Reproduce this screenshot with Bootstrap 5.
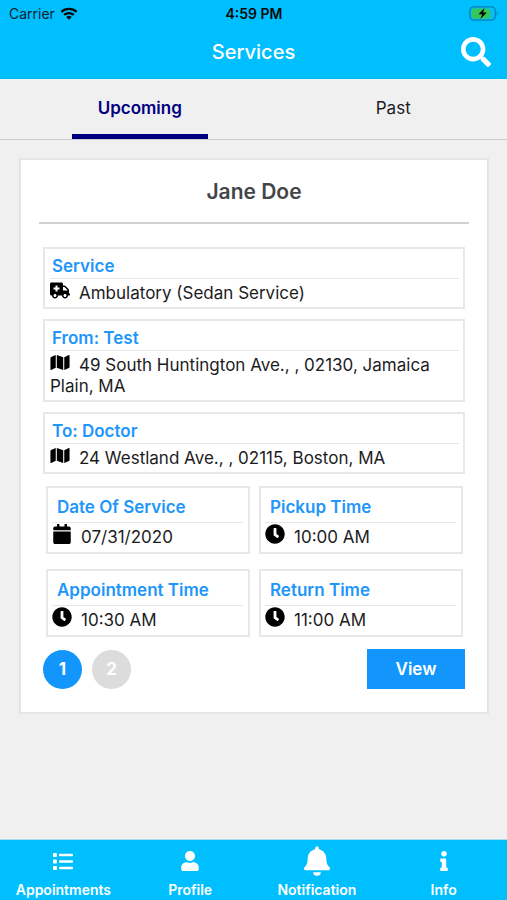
<!DOCTYPE html>
<html lang="en">
<head>
<meta charset="utf-8">
<meta name="viewport" content="width=device-width, initial-scale=1">
<title>Services</title>
<link href="https://cdn.jsdelivr.net/npm/bootstrap@5.3.0/dist/css/bootstrap.min.css" rel="stylesheet">
<style>
body { font-family: Inter, "Liberation Sans", sans-serif; font-size: 17px; line-height: 21px; color: #1c1c1e; background: #f0f0f0; }
.app-top { background: #00bfff; color: #fff; }
.three-up { display: grid; grid-template-columns: 1fr auto 1fr; align-items: center; }
.status { height: 27px; padding: 0 8px 0 9px; font-size: 14px; color: #10222c; }
.status-time { font-weight: 600; color: #0a0a0a; }
.title-bar { height: 52px; padding: 0 16px 2px; }
.title-bar h1 { font-size: 20px; line-height: 24px; font-weight: 500; }
.view-tabs { height: 61px; border-bottom: 1px solid #ccc; }
.view-tabs .tab-cell { padding-left: 26px; }
.tab-btn { width: 136px; height: 60px; border: 0; border-bottom: 5px solid transparent; background: none; color: #1c1c1e; padding: 4px 0 0; }
.tab-btn.active { color: #000080; font-weight: 600; border-bottom-color: #000080; }
.trip { margin: 18px 18px 0 19px; border: 2px solid #e2e4e5; background: #fff; padding: 0 18px 23px; }
.trip h2 { font-size: 21px; line-height: 26px; font-weight: 600; color: #434548; padding: 19px 0 17px; border-bottom: 2px solid #d0d0d0; }
.trip-body { padding: 23px 4px 0; }
.box-stack { gap: 10px; }
.info-box { border: 2px solid #e8e8e8; padding: 7px 4px 3px 5px; }
.info-box h3 { font-size: 17px; line-height: 21px; font-weight: 600; color: #1e96fa; margin: 0; padding: 0 0 1px 2px; border-bottom: 1px solid #e6e6e6; }
.info-box p { margin: 0; padding-top: 4px; }
.info-box svg { width: 20px; height: 17px; margin: -8px 9px 0 0; fill: #000; vertical-align: middle; }
.half-grid { display: grid; grid-template-columns: 1fr 1fr; gap: 15px 9px; padding: 12px 2px 0 3px; }
.half-grid .info-box { padding: 9px 5px 4px 4px; }
.half-grid h3 { padding: 0 0 4px 5px; }
.half-grid svg { height: 20px; }
.page-dots { gap: 10px; }
.page-dot { width: 39px; height: 39px; border: 0; border-radius: 50%; background: #dcdcdc; color: #fff; font-weight: 700; }
.page-dot.active { background: #1296fc; }
.view-btn { width: 98px; height: 40px; border: 0; background: #1296fc; color: #fff; font-weight: 600; }
.bottom-nav { background: #00bfff; border-top: 1px solid #a6dcec; height: 61px; }
.bottom-nav a { color: #fff; font-size: 14px; line-height: 16px; font-weight: 600; padding-top: 6px; gap: 6px; }
.nav-glyph { height: 30px; display: flex; align-items: center; }
.nav-glyph svg { fill: #fff; }
</style>
<script src="https://cdn.jsdelivr.net/npm/bootstrap@5.3.0/dist/js/bootstrap.bundle.min.js"></script>
</head>
<body class="d-flex flex-column min-vh-100">
<svg class="d-none" aria-hidden="true">
  <symbol id="i-map" viewBox="0 0 576 512"><path d="M0 117.66v346.32c0 11.32 11.43 19.06 21.94 14.86L160 416V32L20.12 87.95A32.006 32.006 0 0 0 0 117.66zM192 416l192 64V96L192 32v384zM554.06 33.16L416 96v384l139.88-55.95A31.996 31.996 0 0 0 576 394.34V48.02c0-11.32-11.43-19.06-21.94-14.86z"/></symbol>
  <symbol id="i-clock" viewBox="0 0 512 512"><path d="M256 8C119 8 8 119 8 256s111 248 248 248 248-111 248-248S393 8 256 8zm57.1 350.1L224.9 294c-3.1-2.3-4.9-5.9-4.9-9.7V116c0-6.6 5.4-12 12-12h48c6.6 0 12 5.4 12 12v137.7l63.5 46.2c5.4 3.9 6.5 11.4 2.6 16.8l-28.2 38.8c-3.9 5.3-11.4 6.5-16.8 2.6z"/></symbol>
</svg>

<header class="app-top">
  <div class="status three-up">
    <div class="d-flex align-items-center gap-1">
      <span>Carrier</span>
      <svg width="20" height="15" viewBox="0 0 22 16" fill="none" stroke="#0a0a0a" stroke-width="2.6" aria-hidden="true"><path d="M2.600 6.200a12.500 12.500 0 0 1 16.800 0M5.700 9.600a7.900 7.900 0 0 1 10.600 0"/><path d="M11 15l-3-3.200a4.300 4.300 0 0 1 6 0z" fill="#0a0a0a" stroke="none"/></svg>
    </div>
    <span class="status-time">4:59 PM</span>
    <svg class="ms-auto" width="30" height="15" viewBox="0 0 30 15" aria-hidden="true"><rect x=".8" y=".8" width="25.500" height="13.400" rx="4" fill="none" stroke="#0a7fb0" stroke-width="1.200"/><rect x="2.500" y="2.500" width="19" height="10" rx="2.500" fill="#35c75a"/><path d="M27.800 5q2 2.500 0 5z" fill="#0a7fb0"/><path d="M15.500 2L9.500 8.200h3.600L11.500 13l6.300-6.400h-3.700z" fill="#000"/></svg>
  </div>
  <div class="title-bar three-up">
    <span></span>
    <h1 class="m-0">Services</h1>
    <button type="button" class="btn p-0 border-0 ms-auto d-flex" aria-label="Search"><svg width="30" height="30" viewBox="0 0 512 512" fill="#fff"><path d="M505 442.700L405.300 343c-4.500-4.500-10.600-7-17-7H372c27.600-35.300 44-79.700 44-128C416 93.100 322.900 0 208 0S0 93.100 0 208s93.100 208 208 208c48.300 0 92.700-16.400 128-44v16.300c0 6.400 2.500 12.500 7 17l99.700 99.700c9.400 9.400 24.600 9.400 33.900 0l28.300-28.300c9.400-9.400 9.400-24.600.1-34zM208 336c-70.700 0-128-57.200-128-128 0-70.700 57.200-128 128-128 70.700 0 128 57.200 128 128 0 70.700-57.200 128-128 128z"/></svg></button>
  </div>
</header>

<nav class="view-tabs row g-0" aria-label="Service period">
  <div class="col-6 tab-cell text-center"><button type="button" class="tab-btn active">Upcoming</button></div>
  <div class="col-6 tab-cell text-center"><button type="button" class="tab-btn">Past</button></div>
</nav>

<main class="flex-grow-1">
  <article class="trip">
    <h2 class="m-0 text-center">Jane Doe</h2>
    <div class="trip-body">
      <div class="box-stack d-flex flex-column">
        <section class="info-box">
          <h3>Service</h3>
          <p><svg viewBox="0 0 640 512" aria-hidden="true"><path d="M624 352h-16V243.900c0-12.700-5.100-24.900-14.100-33.900L494 110.100c-9-9-21.200-14.100-33.900-14.100H416V48c0-26.500-21.500-48-48-48H48C21.500 0 0 21.500 0 48v320c0 26.500 21.500 48 48 48h16c0 53 43 96 96 96s96-43 96-96h128c0 53 43 96 96 96s96-43 96-96h48c8.800 0 16-7.200 16-16v-32c0-8.800-7.200-16-16-16zM160 464c-26.500 0-48-21.500-48-48s21.500-48 48-48 48 21.500 48 48-21.500 48-48 48zm144-248c0 4.400-3.600 8-8 8h-56v56c0 4.400-3.600 8-8 8h-48c-4.400 0-8-3.600-8-8v-56h-56c-4.400 0-8-3.600-8-8v-48c0-4.400 3.600-8 8-8h56v-56c0-4.400 3.600-8 8-8h48c4.400 0 8 3.600 8 8v56h56c4.400 0 8 3.600 8 8v48zm176 248c-26.500 0-48-21.500-48-48s21.500-48 48-48 48 21.500 48 48-21.500 48-48 48zm80-208H416V144h44.100l99.900 99.900V256z"/></svg>Ambulatory (Sedan Service)</p>
        </section>
        <section class="info-box">
          <h3>From: Test</h3>
          <p><svg aria-hidden="true"><use href="#i-map"/></svg>49 South Huntington Ave., , 02130, Jamaica Plain, MA</p>
        </section>
        <section class="info-box">
          <h3>To: Doctor</h3>
          <p><svg aria-hidden="true"><use href="#i-map"/></svg>24 Westland Ave., , 02115, Boston, MA</p>
        </section>
      </div>
      <div class="half-grid">
        <section class="info-box">
          <h3>Date Of Service</h3>
          <p><svg viewBox="0 0 448 512" aria-hidden="true"><path d="M12 192h424c6.600 0 12 5.400 12 12v260c0 26.500-21.500 48-48 48H48c-26.500 0-48-21.500-48-48V204c0-6.600 5.400-12 12-12zm436-44v-36c0-26.500-21.500-48-48-48h-48V12c0-6.600-5.400-12-12-12h-40c-6.600 0-12 5.400-12 12v52H160V12c0-6.600-5.400-12-12-12h-40c-6.600 0-12 5.400-12 12v52H48C21.500 64 0 85.500 0 112v36c0 6.600 5.400 12 12 12h424c6.600 0 12-5.400 12-12z"/></svg>07/31/2020</p>
        </section>
        <section class="info-box">
          <h3>Pickup Time</h3>
          <p><svg aria-hidden="true"><use href="#i-clock"/></svg>10:00 AM</p>
        </section>
        <section class="info-box">
          <h3>Appointment Time</h3>
          <p><svg aria-hidden="true"><use href="#i-clock"/></svg>10:30 AM</p>
        </section>
        <section class="info-box">
          <h3>Return Time</h3>
          <p><svg aria-hidden="true"><use href="#i-clock"/></svg>11:00 AM</p>
        </section>
      </div>
      <div class="page-dots d-flex align-items-center pt-2 mt-1">
        <button type="button" class="page-dot active p-0">1</button>
        <button type="button" class="page-dot p-0">2</button>
        <button type="button" class="view-btn ms-auto p-0">View</button>
      </div>
    </div>
  </article>
</main>

<nav class="bottom-nav row g-0" aria-label="Main">
  <a href="#" class="col-3 d-flex flex-column align-items-center text-decoration-none"><span class="nav-glyph"><svg width="20" height="17" viewBox="0 0 20 17"><rect width="4" height="4" rx="1"/><rect y="6.500" width="4" height="4" rx="1"/><rect y="13" width="4" height="4" rx="1"/><rect x="6" y=".7" width="14" height="2.600" rx="1"/><rect x="6" y="7.200" width="14" height="2.600" rx="1"/><rect x="6" y="13.700" width="14" height="2.600" rx="1"/></svg></span>Appointments</a>
  <a href="#" class="col-3 d-flex flex-column align-items-center text-decoration-none"><span class="nav-glyph"><svg width="18" height="20" viewBox="0 0 448 512"><path d="M224 256c70.700 0 128-57.300 128-128S294.700 0 224 0 96 57.300 96 128s57.300 128 128 128zm89.600 32h-16.700c-22.200 10.200-46.900 16-72.900 16s-50.600-5.800-72.900-16h-16.700C60.200 288 0 348.200 0 422.400V464c0 26.500 21.500 48 48 48h352c26.500 0 48-21.500 48-48v-41.600c0-74.200-60.200-134.400-134.400-134.400z"/></svg></span>Profile</a>
  <a href="#" class="col-3 d-flex flex-column align-items-center text-decoration-none"><span class="nav-glyph"><svg width="26" height="30" viewBox="0 0 448 512"><path d="M290 450a66 62 0 0 1-132 0zM439.390 362.290c-19.320-20.760-55.470-51.990-55.470-154.290 0-77.700-54.480-139.900-127.940-155.160V32c0-17.670-14.320-32-31.980-32s-31.980 14.330-31.980 32v20.840C118.560 68.100 64.080 130.300 64.080 208c0 102.300-36.150 133.530-55.470 154.290-6 6.450-8.660 14.160-8.610 21.710.11 16.400 12.980 32 32.100 32h383.800c19.120 0 32-15.600 32.100-32 .05-7.550-2.610-15.270-8.610-21.710z"/></svg></span>Notification</a>
  <a href="#" class="col-3 d-flex flex-column align-items-center text-decoration-none"><span class="nav-glyph"><svg width="8" height="20" viewBox="0 0 192 512"><path d="M20 424.229h20V279.771H20c-11.046 0-20-8.954-20-20V212c0-11.046 8.954-20 20-20h112c11.046 0 20 8.954 20 20v212.229h20c11.046 0 20 8.954 20 20V492c0 11.046-8.954 20-20 20H20c-11.046 0-20-8.954-20-20v-47.771c0-11.046 8.954-20 20-20zM96 0C56.235 0 24 32.235 24 72s32.235 72 72 72 72-32.235 72-72S135.764 0 96 0z"/></svg></span>Info</a>
</nav>
</body>
</html>
